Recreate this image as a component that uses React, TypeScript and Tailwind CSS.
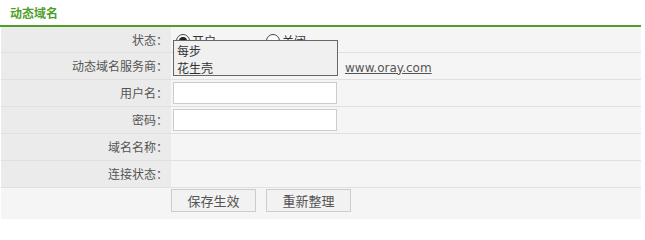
import React from "react";

const cjk = { fontFamily: '"Noto Sans CJK SC", "Noto Sans", sans-serif' };

function Row({ label, children, first }: { label: string; children?: React.ReactNode; first?: boolean }) {
  return (
    <div className={`flex border-b border-[#e0e0e0] ${first ? "h-[26px]" : "h-[27px]"}`}>
      <div className="w-[170px] shrink-0 bg-[#ebebeb] flex items-center justify-end pr-[3px] text-[12px] text-[#555]">
        {label}
      </div>
      <div className="flex-1 bg-[#f5f5f5] flex items-center pl-[2px]">{children}</div>
    </div>
  );
}

function Radio({ checked, label }: { checked?: boolean; label: string }) {
  return (
    <div className="flex items-center gap-[2px]">
      <span className="w-[14px] h-[14px] rounded-full border border-[#444] bg-white flex items-center justify-center">
        {checked && <span className="w-[8px] h-[8px] rounded-full bg-[#222]" />}
      </span>
      <span className="text-[12px] text-[#333]">{label}</span>
    </div>
  );
}

export default function App() {
  return (
    <div className="w-[645px] h-[235px] bg-white relative" style={cjk}>
      <div className="w-[641px] h-[27px] border-b-2 border-[#4e9f2a] flex items-center pl-[10px]">
        <span className="text-[12px] font-bold text-[#4e9f2a]">动态域名</span>
      </div>
      <div className="ml-[1px] w-[640px]">
        <Row label="状态：" first>
          <div className="flex items-center pl-[3px] pt-[2px]">
            <div className="w-[90px]">
              <Radio checked label="开启" />
            </div>
            <Radio label="关闭" />
          </div>
        </Row>
        <Row label="动态域名服务商：">
          <div className="w-[172px]" />
          <span className="text-[12px] text-[#555] underline pt-[3px]" style={{ fontFamily: '"DejaVu Sans", sans-serif' }}>
            www.oray.com
          </span>
        </Row>
        <Row label="用户名：">
          <div className="w-[164px] h-[22px] bg-white border border-[#cccccc]" />
        </Row>
        <Row label="密码：">
          <div className="w-[164px] h-[22px] bg-white border border-[#cccccc]" />
        </Row>
        <Row label="域名名称：" />
        <Row label="连接状态：" />
        <div className="h-[31px] bg-[#f5f5f5] flex items-start pt-[1px] pl-[170px] gap-[10px]">
          <button className="w-[85px] h-[23px] border border-[#cccccc] bg-[#f2f2f2] text-[13px] text-[#555]">保存生效</button>
          <button className="w-[85px] h-[23px] border border-[#cccccc] bg-[#f2f2f2] text-[13px] text-[#555]">重新整理</button>
        </div>
      </div>
      <div className="absolute left-[173px] top-[40px] w-[165px] h-[36px] border border-[#666] bg-[#f0f0f0] flex flex-col pl-[3px] pt-[1px] text-[12px] text-[#333] leading-[17px]">
        <span>每步</span>
        <span>花生壳</span>
      </div>
    </div>
  );
}
